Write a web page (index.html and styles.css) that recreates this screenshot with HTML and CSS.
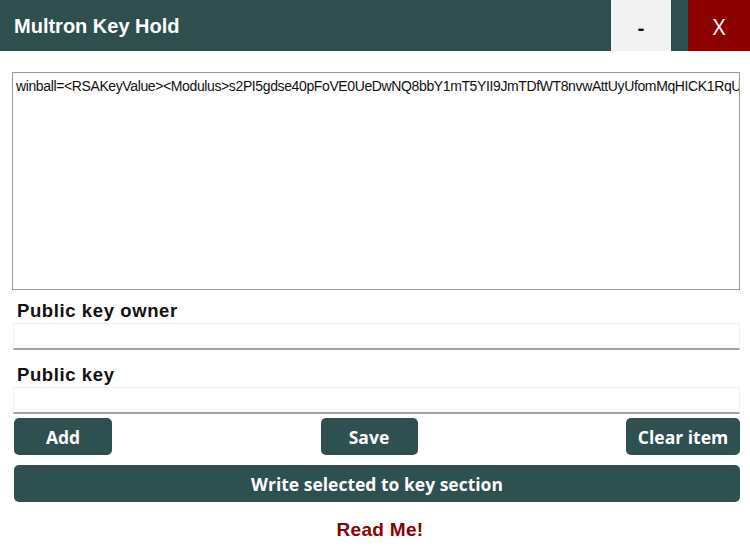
FILE: index.html
```html
<!DOCTYPE html>
<html lang="en">
<head>
    <meta charset="UTF-8">
    <title>Multron Key Hold</title>
    <link rel="stylesheet" href="styles.css">
</head>
<body>
    <div class="titlebar">
        <div class="title">Multron Key Hold</div>
        <button class="win-btn min-btn">-</button>
        <button class="win-btn close-btn">X</button>
    </div>
    <div class="content">
        <textarea class="keys" wrap="off" spellcheck="false">winball=&lt;RSAKeyValue&gt;&lt;Modulus&gt;s2PI5gdse40pFoVE0UeDwNQ8bbY1mT5YII9JmTDfWT8nvwAttUyUfomMqHICK1RqUxZ</textarea>
        <label class="field-label" for="owner">Public key owner</label>
        <input type="text" id="owner" class="field">
        <label class="field-label second" for="pubkey">Public key</label>
        <input type="text" id="pubkey" class="field">
        <div class="actions">
            <button class="btn btn-add">Add</button>
            <button class="btn btn-save">Save</button>
            <button class="btn btn-clear">Clear item</button>
        </div>
        <button class="btn btn-write">Write selected to key section</button>
        <div class="readme">Read Me!</div>
    </div>
</body>
</html>
```

FILE: styles.css
```css
body {
    margin: 0;
    width: 750px;
    height: 548px;
    background-color: #fff;
    font-family: "Liberation Sans", Arial, sans-serif;
    overflow: hidden;
}
.titlebar {
    display: flex;
    align-items: stretch;
    height: 51px;
    background-color: #2f4f4f;
}
.title {
    flex: 1;
    padding: 2px 0 0 14px;
    line-height: 49px;
    color: #fff;
    font-size: 20px;
    font-weight: bold;
}
.win-btn {
    border: none;
    margin: 0;
    padding: 0;
    font-family: "Open Sans", sans-serif;
    cursor: pointer;
}
.min-btn {
    width: 60px;
    margin-right: 17px;
    background-color: #f2f2f2;
    color: #111;
    font-size: 20px;
    font-weight: bold;
    padding-top: 4px;
}
.close-btn {
    width: 62px;
    background-color: #8b0000;
    color: #fff;
    font-size: 22px;
}
.content {
    display: flex;
    flex-direction: column;
    padding: 21px 10px 0 12px;
}
.keys {
    box-sizing: border-box;
    height: 218px;
    margin: 0;
    padding: 5px 3px;
    border: 1px solid #9a9a9a;
    resize: none;
    overflow: hidden;
    white-space: pre;
    font-family: "Liberation Sans", Arial, sans-serif;
    font-size: 14px;
    letter-spacing: -0.38px;
    color: #111;
    outline: none;
}
.field-label {
    margin: 10px 0 0 5px;
    height: 23px;
    font-size: 18.5px;
    letter-spacing: 0.6px;
    font-weight: bold;
    color: #111;
}
.field-label.second {
    margin-top: 14px;
}
.field {
    box-sizing: border-box;
    height: 27px;
    margin: 0 0 0 1px;
    border: 1px solid #f0f0f0;
    border-bottom: 2px solid #a3a3a3;
    background-color: #fff;
    outline: none;
}
.actions {
    display: flex;
    justify-content: space-between;
    margin: 4px 0 0 2px;
}
.btn {
    height: 37px;
    border: none;
    border-radius: 5px;
    background-color: #2f5050;
    color: #fff;
    font-family: "Open Sans", sans-serif;
    font-size: 17.5px;
    font-weight: bold;
    cursor: pointer;
}
.btn-add {
    width: 98px;
}
.btn-save {
    width: 97px;
}
.btn-clear {
    width: 114px;
}
.btn-write {
    margin: 10px 0 0 2px;
}
.readme {
    margin-top: 17px;
    text-align: center;
    color: #8b0000;
    font-size: 19px;
    letter-spacing: 0.3px;
    font-weight: bold;
    padding-left: 8px;
}
```
